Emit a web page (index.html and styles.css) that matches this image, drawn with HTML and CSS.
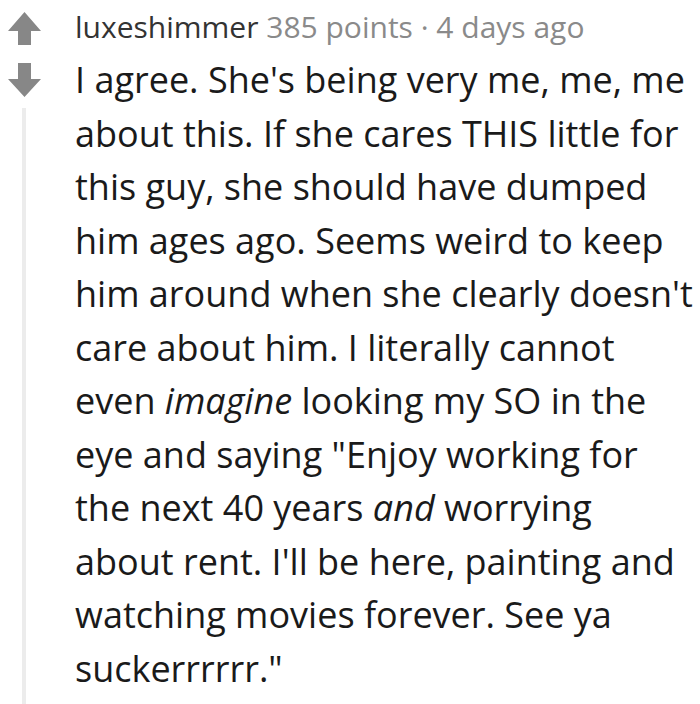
FILE: index.html
```html
<!DOCTYPE html>
<html>
<head>
<meta charset="utf-8">
<link rel="stylesheet" href="styles.css">
</head>
<body>
<div class="comment">
  <div class="votes">
    <svg class="arrow" viewBox="0 0 33 33" width="33" height="33"><path d="M16.5 0 L33 19 L23 19 L23 33 L10 33 L10 19 L0 19 Z" fill="#878787"/></svg>
    <svg class="arrow" viewBox="0 0 33 34" width="33" height="34"><path d="M16.5 34 L33 16 L23 16 L23 0 L10 0 L10 16 L0 16 Z" fill="#878787"/></svg>
    <div class="thread-line"></div>
  </div>
  <div class="content">
    <div class="meta"><span class="author">luxeshimmer</span> <span class="info">385 points · 4 days ago</span></div>
    <p class="body">I agree. She's being very me, me, me about this. If she cares THIS little for this guy, she should have dumped him ages ago. Seems weird to keep him around when she clearly doesn't care about him. I literally cannot even <em>imagine</em> looking my SO in the eye and saying "Enjoy working for the next 40 years <em>and</em> worrying about rent. I'll be here, painting and watching movies forever. See ya suckerrrrrr."</p>
  </div>
</div>
</body>
</html>
```
FILE: styles.css
```css
html, body {
  margin: 0;
  padding: 0;
  background: #ffffff;
}
body {
  font-family: "Open Sans", "Noto Sans", sans-serif;
  width: 700px;
  height: 704px;
  overflow: hidden;
}
.comment {
  display: flex;
  height: 704px;
}
.votes {
  width: 75px;
  flex: none;
  display: flex;
  flex-direction: column;
  align-items: flex-start;
  padding-left: 8px;
  padding-top: 12px;
  box-sizing: border-box;
}
.arrow {
  display: block;
  margin-bottom: 18px;
}
.thread-line {
  margin-left: 14px;
  width: 4px;
  flex: 1;
  background: #ececec;
  margin-top: -7px;
}
.content {
  flex: 1;
  padding-top: 5px;
  padding-right: 5px;
}
.meta {
  font-size: 30px;
  line-height: 44px;
  color: #8a8a8a;
}
.author {
  color: #333333;
}
.body {
  margin: 4px 0 0 0;
  font-size: 36px;
  line-height: 53.5px;
  color: #1a1a1a;
}
```
